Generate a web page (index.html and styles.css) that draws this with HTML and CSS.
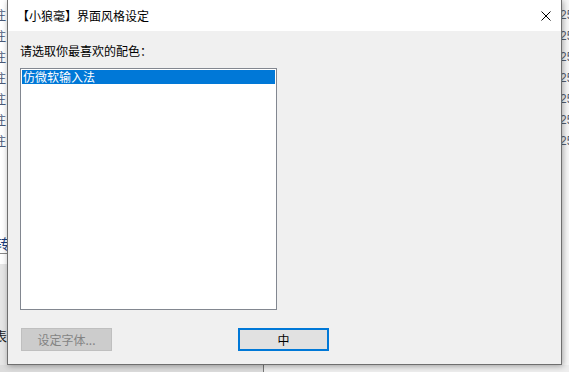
FILE: index.html
```html
<!DOCTYPE html>
<html lang="zh-CN">
<head>
<meta charset="utf-8">
<title>界面风格设定</title>
<link rel="stylesheet" href="styles.css">
</head>
<body>
<div class="desktop">
  <div class="bg-left">
    <div class="bg-lines">
      <span>注</span><span>注</span><span>注</span><span>注</span><span>注</span><span>注</span><span>注</span>
    </div>
    <div class="bg-tab">转</div>
    <div class="bg-gray"><span class="bg-biao">表</span></div>
  </div>
  <div class="bg-right">
    <span>25</span><span>25</span><span>25</span><span>25</span><span>25</span><span>25</span><span>25</span>
  </div>
  <div class="bg-bottom">
    <div class="bg-bottom-left"></div>
    <div class="bg-bottom-right"></div>
  </div>

  <div class="dialog">
    <div class="titlebar">
      <span class="title">【小狼毫】界面风格设定</span>
      <svg class="close" width="10" height="10" viewBox="0 0 10 10">
        <path d="M0.5 0.5 L9.5 9.5 M9.5 0.5 L0.5 9.5" stroke="#000" stroke-width="1" fill="none"/>
      </svg>
    </div>
    <div class="content">
      <div class="label">请选取你最喜欢的配色：</div>
      <div class="listbox">
        <div class="item selected">仿微软输入法</div>
      </div>
      <div class="buttons">
        <button class="btn disabled" disabled>设定字体...</button>
        <button class="btn default">中</button>
      </div>
    </div>
  </div>
</div>
</body>
</html>
```
FILE: styles.css
```css
html, body {
  margin: 0;
  padding: 0;
}
body {
  font-family: "Noto Sans CJK SC", "Noto Sans", sans-serif;
  font-size: 12px;
  color: #000;
}
.desktop {
  position: relative;
  width: 569px;
  height: 372px;
  overflow: hidden;
  background: #ffffff;
}
.bg-left {
  position: absolute;
  left: 0;
  top: 0;
  width: 8px;
  height: 372px;
  overflow: hidden;
  display: flex;
  flex-direction: column;
}
.bg-lines {
  display: flex;
  flex-direction: column;
  padding-top: 7px;
  margin-left: -6px;
}
.bg-lines span {
  height: 21px;
  line-height: 16px;
  color: #4a5a78;
}
.bg-tab {
  margin-top: 80px;
  margin-left: -5px;
  height: 19px;
  line-height: 18px;
  font-size: 14px;
  color: #1a3c7a;
  border-bottom: 1px solid #888;
}
.bg-gray {
  margin-top: 10px;
  flex: 1;
  background: #e6e6e6;
  position: relative;
}
.bg-biao {
  display: block;
  margin-top: 62px;
  margin-left: -6px;
  font-size: 13px;
  color: #222;
}
.bg-right {
  position: absolute;
  left: 562px;
  top: 0;
  width: 7px;
  height: 372px;
  overflow: hidden;
  display: flex;
  flex-direction: column;
  padding-top: 7px;
  box-sizing: border-box;
  background: #f7f7f7;
}
.bg-right span {
  height: 21px;
  line-height: 16px;
  font-family: "Liberation Sans", sans-serif;
  font-size: 12px;
  color: #556070;
  white-space: nowrap;
  margin-left: -2px;
}
.bg-bottom {
  position: absolute;
  left: 0;
  top: 365px;
  width: 569px;
  height: 7px;
  display: flex;
}
.bg-bottom-left {
  width: 263px;
  background: #dcdcdc;
  border-right: 1px solid #777;
}
.bg-bottom-right {
  flex: 1;
  background: #eeeeee;
}
.dialog {
  position: absolute;
  left: 7px;
  top: 0;
  width: 553px;
  height: 364px;
  border: 1px solid #6f6f6f;
  border-top: none;
  background: #f0f0f0;
  box-shadow: 1px 1px 6px rgba(0, 0, 0, 0.35);
  display: flex;
  flex-direction: column;
}
.titlebar {
  height: 31px;
  background: #ffffff;
  display: flex;
  align-items: center;
  justify-content: space-between;
  padding-left: 9px;
  padding-right: 10px;
}
.title {
  font-size: 12px;
  line-height: 16px;
  color: #000;
}
.close {
  display: block;
}
.content {
  display: flex;
  flex-direction: column;
  padding: 12px 0 0 12px;
}
.label {
  line-height: 16px;
  height: 16px;
  margin-bottom: 9px;
}
.listbox {
  width: 253px;
  height: 238px;
  border: 1px solid #828790;
  background: #ffffff;
  padding: 1px;
}
.item {
  height: 14px;
  line-height: 14px;
  padding-left: 1px;
  white-space: nowrap;
}
.item.selected {
  background: #0078d7;
  color: #ffffff;
}
.buttons {
  display: flex;
  gap: 126px;
  margin-top: 18px;
  padding-left: 1px;
}
.btn {
  box-sizing: border-box;
  width: 91px;
  height: 23px;
  font-family: "Noto Sans CJK SC", "Noto Sans", sans-serif;
  font-size: 12px;
  padding: 0;
  margin: 0;
  line-height: 16px;
}
.btn.disabled {
  background: #cccccc;
  border: 1px solid #bfbfbf;
  color: #838383;
}
.btn.default {
  background: #e1e1e1;
  border: 2px solid #0078d7;
  color: #000;
}
```
